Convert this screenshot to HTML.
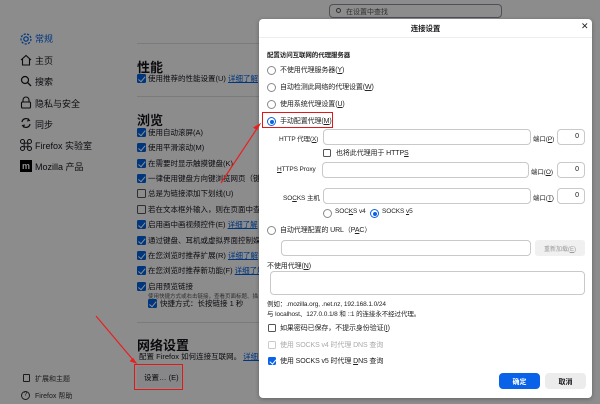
<!DOCTYPE html>
<html><head><meta charset="utf-8"><style>
*{margin:0;padding:0;box-sizing:border-box}
html,body{background:#f9f9fb}
body{width:600px;height:404px;overflow:hidden;font-family:"Liberation Sans","Noto Sans CJK SC",sans-serif;color:#15141a;position:relative;font-size:8px}
.a{position:absolute;white-space:nowrap}
.side{font-size:9px;color:#15141a}
.cb{position:absolute;width:9px;height:9px;border-radius:1.5px;background:#0061e0}
.cb::after{content:"";position:absolute;left:2.5px;top:0.5px;width:3px;height:5.5px;border:solid #fff;border-width:0 1.3px 1.3px 0;transform:rotate(40deg)}
.cbe{position:absolute;width:9px;height:9px;border-radius:1.5px;border:1px solid #555}
.lnk{color:#0061e0;text-decoration:underline}
.hr{position:absolute;height:1px;background:#dcdcdc}
#ov{position:absolute;left:0;top:0;width:600px;height:404px;background:rgba(0,0,0,0.44)}
.dlg{position:absolute;left:259px;top:19px;width:333px;height:379px;background:#fff;border-radius:4px;box-shadow:0 1px 4px rgba(0,0,0,.3);overflow:hidden}
.d{position:absolute;white-space:nowrap;font-size:7px;color:#222;letter-spacing:-0.1px}
.r{position:absolute;width:9px;height:9px;border-radius:50%;border:1px solid #8a8a8a;background:#fff}
.rs{border-color:#0a62e8}
.rs::after{content:"";position:absolute;left:1.5px;top:1.5px;width:4px;height:4px;border-radius:50%;background:#0a62e8}
.in{position:absolute;border:1px solid #c9c9c9;border-radius:4px;background:#fff}
.dcb{position:absolute;width:8px;height:8px;border:1px solid #555;border-radius:1.5px;background:#fff}
.dcbc{background:#0a62e8;border-color:#0a62e8}
.dcbc::after{content:"";position:absolute;left:2px;top:0;width:2.5px;height:5px;border:solid #fff;border-width:0 1.2px 1.2px 0;transform:rotate(40deg)}
</style></head><body>
<div class="a" style="left:329px;top:4px;width:173px;height:14px;border:1px solid #8f8f9d;border-radius:4px;font-size:7px;color:#555;padding:2px 0 0 16px">在设置中查找</div>
<div class="a" style="left:336px;top:8px;width:5px;height:5px;border:1px solid #555;border-radius:50%"></div>
<svg class="a" style="left:19px;top:32px" width="14" height="14" viewBox="0 0 14 14"><circle cx="7" cy="7" r="2.2" fill="none" stroke="#0061e0" stroke-width="1.2"/><circle cx="7" cy="7" r="5" fill="none" stroke="#0061e0" stroke-width="1.2" stroke-dasharray="2.2 1.3"/></svg>
<div class="a side" style="left:35px;top:32px;color:#0061e0">常规</div>
<svg class="a" style="left:20px;top:54px" width="12" height="12" viewBox="0 0 12 12"><path d="M1 6L6 1.5 11 6M2.5 5v6h7V5" fill="none" stroke="#15141a" stroke-width="1.1"/></svg>
<div class="a side" style="left:35px;top:54px">主页</div>
<svg class="a" style="left:20px;top:75px" width="12" height="12" viewBox="0 0 12 12"><circle cx="5" cy="5" r="3.5" fill="none" stroke="#15141a" stroke-width="1.2"/><path d="M7.6 7.6L11 11" stroke="#15141a" stroke-width="1.3"/></svg>
<div class="a side" style="left:35px;top:75px">搜索</div>
<svg class="a" style="left:20px;top:96px" width="12" height="13" viewBox="0 0 12 13"><path d="M3 6V4a3 3 0 0 1 6 0v2" fill="none" stroke="#15141a" stroke-width="1.1"/><rect x="1.5" y="6" width="9" height="6" rx="1" fill="none" stroke="#15141a" stroke-width="1.1"/></svg>
<div class="a side" style="left:35px;top:97px">隐私与安全</div>
<svg class="a" style="left:20px;top:117px" width="12" height="12" viewBox="0 0 12 12"><path d="M2 5a4 4 0 0 1 7-2M10 7a4 4 0 0 1-7 2" fill="none" stroke="#15141a" stroke-width="1.2"/><path d="M8 1.5l1.5 2L7 4M4 10.5L2.5 8.5 5 8" fill="none" stroke="#15141a" stroke-width="1"/></svg>
<div class="a side" style="left:35px;top:118px">同步</div>
<svg class="a" style="left:19px;top:138px" width="14" height="14" viewBox="0 0 14 14"><circle cx="7" cy="7" r="2" fill="none" stroke="#15141a"/><circle cx="3.5" cy="3.5" r="2" fill="none" stroke="#15141a"/><circle cx="10.5" cy="3.5" r="2" fill="none" stroke="#15141a"/><circle cx="3.5" cy="10.5" r="2" fill="none" stroke="#15141a"/><circle cx="10.5" cy="10.5" r="2" fill="none" stroke="#15141a"/></svg>
<div class="a side" style="left:35px;top:139px">Firefox 实验室</div>
<div class="a" style="left:20px;top:160px;width:12px;height:12px;background:#000;color:#fff;font-size:9px;font-weight:bold;line-height:12px;text-align:center">m</div>
<div class="a side" style="left:35px;top:160px">Mozilla 产品</div>
<div class="a" style="left:23px;top:374px;width:7px;height:8px;border:1px solid #333;border-radius:1px"></div>
<div class="a" style="left:35px;top:374px;font-size:7px;color:#333">扩展和主题</div>
<div class="a" style="left:21px;top:391px;width:9px;height:9px;border:1px solid #333;border-radius:50%;font-size:6px;line-height:7px;text-align:center">?</div>
<div class="a" style="left:35px;top:391px;font-size:7px;color:#333">Firefox 帮助</div>
<div class="hr" style="left:137px;top:43px;width:125px"></div>
<div class="a" style="left:137px;top:57px;font-size:13px;font-weight:bold">性能</div>
<div class="cb" style="left:137px;top:74px"></div><div class="a" style="left:148px;top:73px;font-size:7.5px">使用推荐的性能设置(U) <span class="lnk">详细了解</span></div>
<div class="hr" style="left:137px;top:96px;width:125px"></div>
<div class="a" style="left:137px;top:110px;font-size:13px;font-weight:bold">浏览</div>
<div class="cb" style="left:137px;top:128px"></div><div class="a" style="left:148px;top:127px;font-size:7.5px">使用自动滚屏(A)</div>
<div class="cb" style="left:137px;top:143px"></div><div class="a" style="left:148px;top:142px;font-size:7.5px">使用平滑滚动(M)</div>
<div class="cb" style="left:137px;top:159px"></div><div class="a" style="left:148px;top:158px;font-size:7.5px">在需要时显示触摸键盘(K)</div>
<div class="cb" style="left:137px;top:174px"></div><div class="a" style="left:148px;top:173px;font-size:7.5px">一律使用键盘方向键浏览网页（键盘浏</div>
<div class="cbe" style="left:137px;top:189px"></div><div class="a" style="left:148px;top:188px;font-size:7.5px">总是为链接添加下划线(U)</div>
<div class="cbe" style="left:137px;top:205px"></div><div class="a" style="left:148px;top:204px;font-size:7.5px">若在文本框外输入，则在页面中查找文</div>
<div class="cb" style="left:137px;top:220px"></div><div class="a" style="left:148px;top:219px;font-size:7.5px">启用画中画视频控件(E) <span class="lnk">详细了解</span></div>
<div class="cb" style="left:137px;top:236px"></div><div class="a" style="left:148px;top:235px;font-size:7.5px">通过键盘、耳机或虚拟界面控制媒体(V</div>
<div class="cb" style="left:137px;top:251px"></div><div class="a" style="left:148px;top:250px;font-size:7.5px">在您浏览时推荐扩展(R) <span class="lnk">详细了解</span></div>
<div class="cb" style="left:137px;top:266px"></div><div class="a" style="left:148px;top:265px;font-size:7.5px">在您浏览时推荐新功能(F) <span class="lnk">详细了解</span></div>
<div class="cb" style="left:137px;top:282px"></div><div class="a" style="left:148px;top:281px;font-size:7.5px">启用预览链接</div>
<div class="a" style="left:148px;top:292px;font-size:5.5px;color:#555">使用快捷方式或右击链接，查看页面标题、描</div>
<div class="cb" style="left:148px;top:299px"></div><div class="a" style="left:160px;top:298px;font-size:7.5px">快捷方式：长按链接 1 秒</div>
<div class="hr" style="left:137px;top:322px;width:125px"></div>
<div class="a" style="left:137px;top:335px;font-size:13px;font-weight:bold">网络设置</div>
<div class="a" style="left:139px;top:351px;font-size:7.5px">配置 Firefox 如何连接互联网。 <span class="lnk">详细了解</span></div>
<div class="a" style="left:137px;top:366px;width:44px;height:22px;background:#f0f0f4;border-radius:3px;font-size:7.5px;padding:6px 0 0 7px">设置… (E)</div>
<div id="ov"></div>
<div class="a" style="left:134px;top:364px;width:49px;height:26px;border:1.3px solid #e01818"></div>
<div class="dlg">
<div class="d" style="left:0;width:333px;text-align:center;top:4px;font-weight:bold;font-size:7.5px">连接设置</div>
<div class="d" style="left:322px;top:2px;font-size:9px">✕</div>
<div style="position:absolute;left:0;top:18px;width:333px;height:1px;background:#eee"></div>
<div class="d" style="left:8px;top:30px;font-weight:bold;font-size:6.5px">配置访问互联网的代理服务器</div>
<div class="r" style="left:8px;top:47px"></div><div class="d" style="left:21px;top:46px">不使用代理服务器(<u>Y</u>)</div>
<div class="r" style="left:8px;top:64px"></div><div class="d" style="left:21px;top:63px">自动检测此网络的代理设置(<u>W</u>)</div>
<div class="r" style="left:8px;top:81px"></div><div class="d" style="left:21px;top:80px">使用系统代理设置(<u>U</u>)</div>
<div class="r rs" style="left:8px;top:98px"></div><div class="d" style="left:21px;top:97px">手动配置代理(<u>M</u>)</div>
<div style="position:absolute;left:3px;top:93px;width:71px;height:16px;border:1.3px solid #e01818"></div>
<div class="d" style="left:20px;top:114px;font-size:6.5px">HTTP 代理(<u>X</u>)</div>
<div class="in" style="left:64px;top:110px;width:208px;height:16px"></div>
<div class="d" style="left:274px;top:114px;font-size:6.5px">端口(<u>P</u>)</div>
<div class="in" style="left:298px;top:110px;width:28px;height:16px;font-size:7px;text-align:right;padding:3px 5px 0 0">0</div>
<div class="dcb" style="left:64px;top:130px"></div><div class="d" style="left:77px;top:129px">也将此代理用于 HTTP<u>S</u></div>
<div class="d" style="left:18px;top:147px;font-size:6.5px"><u>H</u>TTPS Proxy</div>
<div class="in" style="left:63px;top:143px;width:207px;height:16px"></div>
<div class="d" style="left:272px;top:147px;font-size:6.5px">端口(<u>O</u>)</div>
<div class="in" style="left:298px;top:143px;width:28px;height:16px;font-size:7px;text-align:right;padding:3px 5px 0 0">0</div>
<div class="d" style="left:24px;top:173px;font-size:6.5px">SO<u>C</u>KS 主机</div>
<div class="in" style="left:64px;top:169px;width:208px;height:16px"></div>
<div class="d" style="left:274px;top:173px;font-size:6.5px">端口(<u>T</u>)</div>
<div class="in" style="left:298px;top:169px;width:28px;height:16px;font-size:7px;text-align:right;padding:3px 5px 0 0">0</div>
<div class="r" style="left:64px;top:190px"></div><div class="d" style="left:76px;top:189px;font-size:6.5px">SOC<u>K</u>S v4</div>
<div class="r rs" style="left:111px;top:190px"></div><div class="d" style="left:123px;top:189px;font-size:6.5px">SOCKS <u>v</u>5</div>
<div class="r" style="left:8px;top:207px"></div><div class="d" style="left:21px;top:206px">自动代理配置的 URL（P<u>A</u>C）</div>
<div class="in" style="left:22px;top:221px;width:250px;height:16px"></div>
<div class="a" style="left:276px;top:221px;width:50px;height:16px;background:#f0f0f0;border-radius:3px;font-size:6px;color:#999;text-align:center;padding-top:4px">重新加载(<u>E</u>)</div>
<div class="d" style="left:8px;top:242px">不使用代理(<u>N</u>)</div>
<div class="in" style="left:11px;top:252px;width:315px;height:24px"></div>
<div class="d" style="left:8px;top:279px;font-size:6.5px">例如：.mozilla.org, .net.nz, 192.168.1.0/24</div>
<div class="d" style="left:8px;top:289px;font-size:6.5px">与 localhost、127.0.0.1/8 和 ::1 的连接永不经过代理。</div>
<div class="dcb" style="left:9px;top:305px"></div><div class="d" style="left:21px;top:304px">如果密码已保存，不提示身份验证(<u>I</u>)</div>
<div class="dcb" style="left:9px;top:322px;border-color:#ccc"></div><div class="d" style="left:21px;top:321px;color:#aaa">使用 SOCKS v4 时代理 DNS 查询</div>
<div class="dcb dcbc" style="left:9px;top:338px"></div><div class="d" style="left:21px;top:337px">使用 SOCKS v5 时代理 <u>D</u>NS 查询</div>
<div class="a" style="left:240px;top:354px;width:41px;height:16px;background:#0a62e8;border-radius:4px;color:#fff;font-size:7px;font-weight:bold;text-align:center;padding-top:4px">确定</div>
<div class="a" style="left:286px;top:354px;width:41px;height:16px;background:#ececec;border-radius:4px;font-size:7px;font-weight:bold;text-align:center;padding-top:4px">取消</div>
</div>
<svg class="a" style="left:0;top:0" width="600" height="404">
<path d="M221 183L258 127" stroke="#e82020" stroke-width="1.2"/><path d="M260 124l-6 3.5 3 2z" fill="#e82020" stroke="#e82020"/>
<path d="M96 316L134 361" stroke="#e82020" stroke-width="1.2"/><path d="M136 363l-5.5-2 2.5-2.5z" fill="#e82020" stroke="#e82020"/>
</svg>
</body></html>
